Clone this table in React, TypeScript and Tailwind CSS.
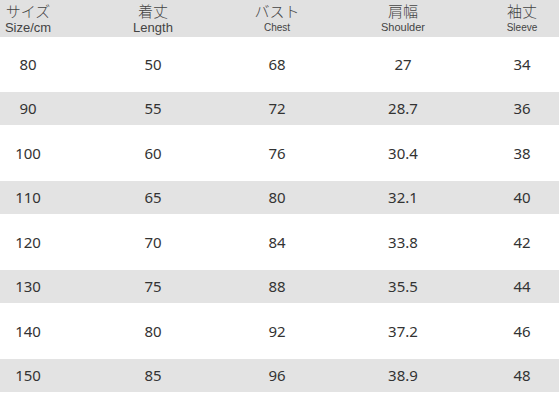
const rows = [
  ["80", "50", "68", "27", "34"],
  ["90", "55", "72", "28.7", "36"],
  ["100", "60", "76", "30.4", "38"],
  ["110", "65", "80", "32.1", "40"],
  ["120", "70", "84", "33.8", "42"],
  ["130", "75", "88", "35.5", "44"],
  ["140", "80", "92", "37.2", "46"],
  ["150", "85", "96", "38.9", "48"],
];

const headers = [
  { ja: "サイズ", en: "Size/cm", enClass: "text-[13px]" },
  { ja: "着丈", en: "Length", enClass: "text-[13px]" },
  { ja: "バスト", en: "Chest", enClass: "text-[10px]" },
  { ja: "肩幅", en: "Shoulder", enClass: "text-[11px]" },
  { ja: "袖丈", en: "Sleeve", enClass: "text-[10px]" },
];

const grid = "grid grid-cols-[56px_194px_54px_198px_40px]";

export default function App() {
  return (
    <div className="w-[559px] h-[400px] overflow-hidden bg-white text-[#333] font-['Noto_Sans','Noto_Sans_CJK_JP',sans-serif]">
      <div className={`${grid} h-[37px] bg-[#e1e1e1] items-center`}>
        {headers.map((h) => (
          <div key={h.en} className="flex flex-col items-center whitespace-nowrap">
            <span className="text-[15px] leading-[17px] font-light text-[#444]">{h.ja}</span>
            <span className={`${h.enClass} leading-[15px] font-['Liberation_Sans',sans-serif] text-[#444]`}>{h.en}</span>
          </div>
        ))}
      </div>
      {rows.map((r, i) => (
        <div
          key={r[0]}
          className={`${grid} items-center ${i % 2 ? "h-[33px] bg-[#e3e3e3]" : i === 0 ? "h-[55px] bg-white" : "h-[56px] bg-white"}`}
        >
          {r.map((v, j) => (
            <div key={j} className="text-center text-[15px] whitespace-nowrap">
              {v}
            </div>
          ))}
        </div>
      ))}
    </div>
  );
}
